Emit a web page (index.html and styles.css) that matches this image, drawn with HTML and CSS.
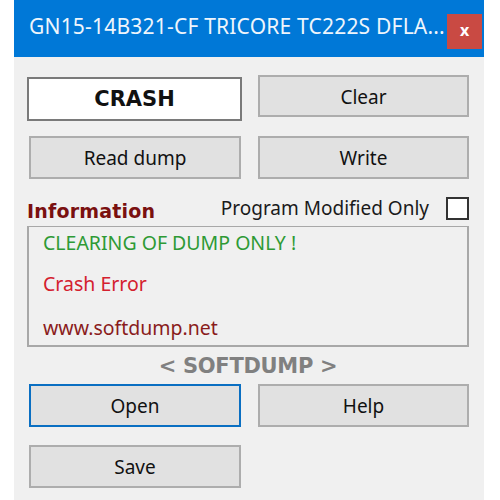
FILE: index.html
```html
<!DOCTYPE html>
<html>
<head>
<meta charset="utf-8">
<link rel="stylesheet" href="styles.css">
</head>
<body>
<div class="window">
  <div class="titlebar">
    <span class="title">GN15-14B321-CF TRICORE TC222S DFLA...</span>
    <span class="close">x</span>
  </div>
  <div class="content">
    <div class="row row1">
      <div class="crash">CRASH</div>
      <div class="btn btn-clear">Clear</div>
    </div>
    <div class="row row2">
      <div class="btn">Read dump</div>
      <div class="btn">Write</div>
    </div>
    <div class="info-head">
      <span class="info-label">Information</span>
      <span class="pmo">Program Modified Only</span>
      <span class="checkbox"></span>
    </div>
    <div class="info-box">
      <div class="line green">CLEARING OF DUMP ONLY !</div>
      <div class="line red">Crash Error</div>
      <div class="line darkred">www.softdump.net</div>
    </div>
    <div class="brand">&lt; SOFTDUMP &gt;</div>
    <div class="row row3">
      <div class="btn btn-focus">Open</div>
      <div class="btn">Help</div>
    </div>
    <div class="row row4">
      <div class="btn">Save</div>
    </div>
  </div>
</div>
</body>
</html>
```
FILE: styles.css
```css
* { box-sizing: border-box; }
html, body { margin: 0; padding: 0; background: #ffffff; }
body { font-family: "Noto Sans", "Open Sans", sans-serif; }

.window {
  margin-left: 14px;
  width: 470px;
  height: 500px;
  background: #f0f0f0;
}

.titlebar {
  height: 57px;
  background: #0078d7;
  display: flex;
  align-items: center;
  justify-content: space-between;
  padding-left: 15px;
  padding-right: 2px;
}
.title {
  color: #eef5fc;
  font-size: 21px;
  letter-spacing: 0.2px;
  padding-bottom: 5px;
}
.close {
  width: 35px;
  height: 35px;
  background: #c94a43;
  color: #fff;
  font-weight: bold;
  font-size: 16px;
  display: flex;
  align-items: center;
  justify-content: center;
  margin-top: 5px;
  padding-bottom: 3px;
}

.content {
  padding: 18px 15px 0 13px;
  display: flex;
  flex-direction: column;
}

.row {
  display: grid;
  grid-template-columns: 215px 211px;
  column-gap: 16px;
  align-items: start;
}
.row1 { height: 46px; }
.row2 { margin-top: 15px; }
.row3 { margin-top: 6px; }
.row4 { margin-top: 18px; }

.btn {
  height: 43px;
  background: #e1e1e1;
  border: 2px solid #adadad;
  display: flex;
  align-items: center;
  justify-content: center;
  font-size: 19px;
  color: #111;
  padding-top: 1px;
}
.row2 .btn:first-child, .row3 .btn:first-child, .row4 .btn:first-child {
  margin: 0 1px 0 2px;
}
.btn-clear { height: 42px; }
.btn-focus { border-color: #0a6fc2; }

.crash {
  margin-top: 2px;
  height: 44px;
  background: #ffffff;
  border: 2px solid #7a7a7a;
  display: flex;
  align-items: center;
  justify-content: center;
  font-family: "DejaVu Sans", sans-serif;
  font-weight: bold;
  font-size: 21px;
  color: #111;
}

.info-head {
  height: 47px;
  display: flex;
  align-items: flex-end;
  padding-bottom: 6px;
}
.info-label {
  font-family: "DejaVu Sans", sans-serif;
  font-weight: bold;
  font-size: 19px;
  color: #7a1010;
  letter-spacing: 0.2px;
  line-height: 22px;
  margin-bottom: -2px;
}
.pmo {
  margin-left: auto;
  font-size: 19px;
  color: #1a1a1a;
  line-height: 22px;
  margin-right: 17px;
  margin-bottom: 1px;
}
.checkbox {
  width: 23px;
  height: 23px;
  border: 2px solid #333;
  background: #fff;
}

.info-box {
  height: 121px;
  border: 2px solid #a8a8a8;
  border-top-width: 1px;
  padding: 5px 0 0 14px;
  font-size: 19.5px;
  line-height: 22px;
}
.line { height: 22px; }
.green { color: #2e9a35; }
.red { color: #d4202e; margin-top: 19px; }
.darkred { color: #8a1c1c; margin-top: 22px; }

.brand {
  margin-top: 7px;
  height: 24px;
  line-height: 24px;
  text-align: center;
  font-family: "DejaVu Sans", sans-serif;
  font-weight: bold;
  font-size: 21px;
  color: #808080;
  letter-spacing: -0.3px;
}
```
